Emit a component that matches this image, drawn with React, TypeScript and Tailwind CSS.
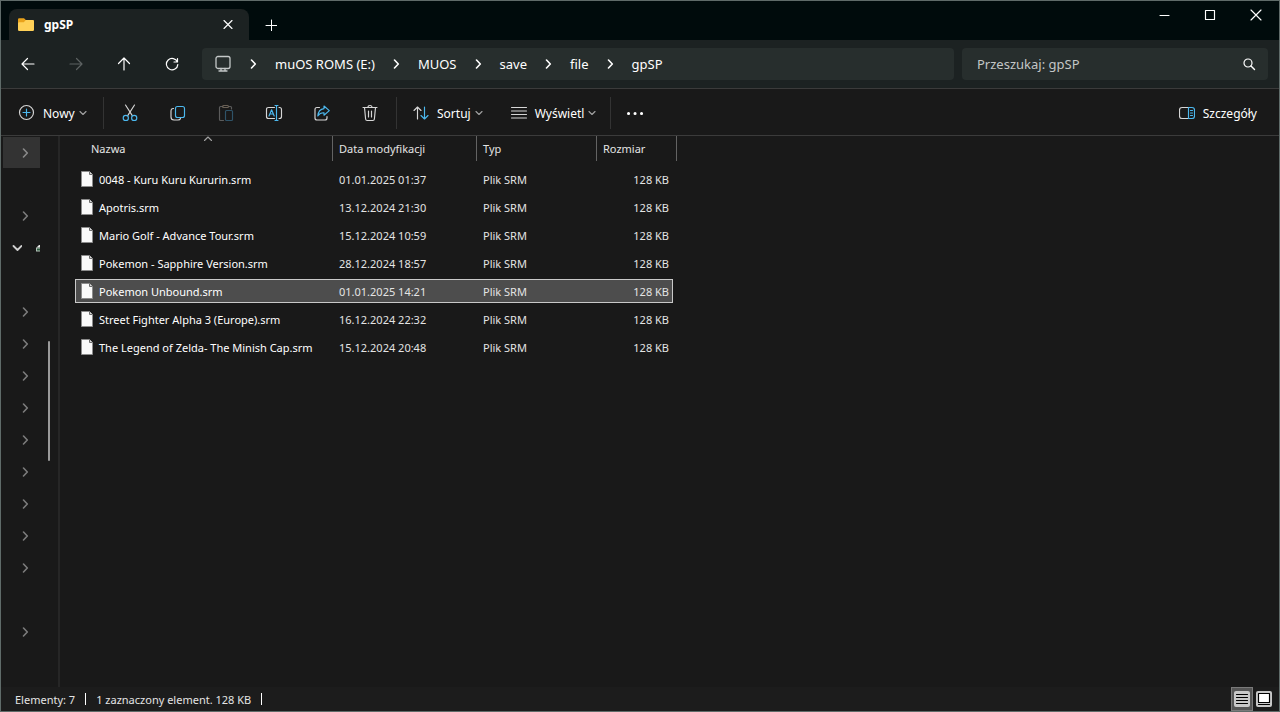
import React, { useState } from 'react';

const files = [
    { name: '0048 - Kuru Kuru Kururin.srm', date: '01.01.2025 01:37' },
    { name: 'Apotris.srm', date: '13.12.2024 21:30' },
    { name: 'Mario Golf - Advance Tour.srm', date: '15.12.2024 10:59' },
    { name: 'Pokemon - Sapphire Version.srm', date: '28.12.2024 18:57' },
    { name: 'Pokemon Unbound.srm', date: '01.01.2025 14:21' },
    { name: 'Street Fighter Alpha 3 (Europe).srm', date: '16.12.2024 22:32' },
    { name: 'The Legend of Zelda- The Minish Cap.srm', date: '15.12.2024 20:48' },
];

const crumbs = ['muOS ROMS (E:)', 'MUOS', 'save', 'file', 'gpSP'];

// one entry per 32px row of the collapsed tree
const tree = [
    'active', 'none', 'closed', 'open', 'none', 'closed', 'closed', 'closed', 'closed',
    'closed', 'closed', 'closed', 'closed', 'closed', 'none', 'closed',
];

type IconProps = { children: React.ReactNode; size?: number; className?: string };

const Icon = ({ children, size = 18, className = '' }: IconProps) => (
    <svg
        width={size}
        height={size}
        viewBox={`0 0 ${size} ${size}`}
        fill="none"
        stroke="currentColor"
        strokeWidth="1.15"
        strokeLinecap="round"
        strokeLinejoin="round"
        className={`shrink-0 ${className}`}
        aria-hidden="true"
    >
        {children}
    </svg>
);

const BLUE = '#4cb8ee';

const FolderIcon = () => (
    <Icon size={16}>
        <path d="M0 2.4Q0 1.2 1.2 1.2H6L7.8 3H14.5Q15.8 3 15.8 4.2V9H0Z" fill="#e9a21b" stroke="none" />
        <path d="M0 6.4Q0 5.2 1.2 5.2H5.8L7.8 3H14.6Q16 3 16 4.3V12.8Q16 14 14.8 14H1.2Q0 14 0 12.8Z" fill="#ffd158" stroke="none" />
    </Icon>
);

const FileIcon = () => (
    <svg width="12" height="16" viewBox="0 0 12 16" className="shrink-0" aria-hidden="true">
        <path d="M0.5 0.5H8.5L11.5 3.5V15.5H0.5Z" fill="#fafafa" stroke="#8c8c8c" />
        <path d="M8.5 0.5V3.5H11.5" fill="#d8d8d8" stroke="#6e6e6e" />
    </svg>
);

const ChevronRight = ({ className = '' }: { className?: string }) => (
    <Icon size={10} className={className}>
        <path d="M3.5 1L7.3 5L3.5 9" strokeWidth="1.6" />
    </Icon>
);

const ChevronDown = () => (
    <Icon size={8} className="text-[#a0a0a0]">
        <path d="M1 2.5L4 5.5L7 2.5" />
    </Icon>
);

const toolIcons = [
    {
        label: 'Wytnij',
        icon: (
            <Icon>
                <path d="M4.5 1L11.3 11.6M13.5 1L6.7 11.6" stroke="#d6d6d6" />
                <circle cx="4.8" cy="13.9" r="2.6" stroke={BLUE} />
                <circle cx="13.2" cy="13.9" r="2.6" stroke={BLUE} />
            </Icon>
        ),
    },
    {
        label: 'Kopiuj',
        icon: (
            <Icon>
                <path d="M4.5 4.5H4Q2 4.7 2 6.7V13Q2 16 5 16H9Q11 16 11.5 14.5" stroke="#d6d6d6" />
                <rect x="6.5" y="2.5" width="9" height="11" rx="2" stroke={BLUE} />
            </Icon>
        ),
    },
    {
        label: 'Wklej',
        icon: (
            <Icon>
                <path d="M6 2.5H3.5Q2.5 2.5 2.5 3.5V15.5Q2.5 16.5 3.5 16.5H6.5M12 2.5H13.5Q14.5 2.5 14.5 3.5V5" stroke="#5c5c5c" />
                <rect x="5.5" y="1.5" width="6" height="2" rx="1" stroke="#6a6055" />
                <rect x="8.5" y="6.5" width="7" height="10" rx="1" stroke="#2f5368" />
            </Icon>
        ),
    },
    {
        label: 'Zmień nazwę',
        icon: (
            <Icon>
                <path d="M9.5 3.5H3.5Q1.5 3.5 1.5 5.5V12.5Q1.5 14.5 3.5 14.5H9.5M14 3.5H14.5Q16.5 3.5 16.5 5.5V12.5Q16.5 14.5 14.5 14.5H14" stroke="#d6d6d6" />
                <path d="M4 12L6.6 5.8L9.2 12M5 10H8.2M11.5 1.5V16.5M10 1.5H13M10 16.5H13" stroke={BLUE} />
            </Icon>
        ),
    },
    {
        label: 'Udostępnij',
        icon: (
            <Icon>
                <path d="M6.5 3.5H4Q2 3.5 2 5.5V14Q2 16 4 16H12Q14 16 14 14V12.5" stroke="#d6d6d6" />
                <path d="M11 2L16.3 6.6L11 11.2V8.8Q7 8.6 4.8 12Q5.4 5.2 11 4.6Z" stroke={BLUE} />
            </Icon>
        ),
    },
    {
        label: 'Usuń',
        icon: (
            <Icon>
                <path d="M2 3.5H16M7 3.5Q7 1.5 9 1.5Q11 1.5 11 3.5M3.5 3.5L4.6 15Q4.7 16.5 6.2 16.5H11.8Q13.3 16.5 13.4 15L14.5 3.5M7.5 7V13M10.5 7V13" stroke="#d6d6d6" />
            </Icon>
        ),
    },
];

const TitleBar = () => (
    <header className="flex h-[39px] items-start bg-[#000b0c]">
        <div className="ml-2 mt-2 flex h-[31px] w-60 items-center rounded-t-lg bg-[#1c2222] pl-[9px] pr-[13px]">
            <FolderIcon />
            <span className="ml-2.5 flex-1 text-[12px] font-bold text-white">gpSP</span>
            <button aria-label="Zamknij kartę">
                <Icon size={16}>
                    <path d="M4 3.5L12 11.5M12 3.5L4 11.5" />
                </Icon>
            </button>
        </div>
        <button aria-label="Nowa karta" className="mt-2 flex h-8 w-11 items-center justify-center">
            <Icon size={12}>
                <path d="M6.5 1V12M1 6.5H12" strokeWidth="1" />
            </Icon>
        </button>
        <div className="ml-auto flex h-7">
            <button aria-label="Minimalizuj" className="flex w-[46px] items-center justify-center">
                <Icon size={12}><path d="M2 6.5H11" /></Icon>
            </button>
            <button aria-label="Maksymalizuj" className="flex w-[46px] items-center justify-center">
                <Icon size={12}><path d="M1.5 1.5H10.5V10.5H1.5Z" /></Icon>
            </button>
            <button aria-label="Zamknij" className="flex w-[46px] items-center justify-center">
                <Icon size={12}><path d="M1 1L11 11M11 1L1 11" /></Icon>
            </button>
        </div>
    </header>
);

const AddressBar = () => (
    <div className="flex h-12 items-center bg-[#1c2222] pl-[3px] pr-[11px]">
        <button aria-label="Wstecz" className="flex h-8 w-12 items-center justify-center">
            <Icon size={14}><path d="M1 7H13M6.5 1.5L1 7L6.5 12.5" strokeWidth="1.2" /></Icon>
        </button>
        <button aria-label="Dalej" disabled className="flex h-8 w-12 items-center justify-center text-[#5d6262]">
            <Icon size={14}><path d="M1 7H13M7.5 1.5L13 7L7.5 12.5" strokeWidth="1.2" /></Icon>
        </button>
        <button aria-label="W górę" className="flex h-8 w-12 items-center justify-center">
            <Icon size={14}><path d="M7 1V13M1.5 6.5L7 1L12.5 6.5" strokeWidth="1.2" /></Icon>
        </button>
        <button aria-label="Odśwież" className="flex h-8 w-12 items-center justify-center">
            <Icon size={14}>
                <path d="M12.4 5A5.7 5.7 0 1 0 12.8 7.6M12.5 1.5V5H9" strokeWidth="1.2" />
            </Icon>
        </button>
        <nav className="ml-1.5 flex h-8 flex-1 items-center rounded bg-[#272e2d] pl-3 text-[13px] text-white">
            <Icon size={18} className="text-[#c4c8c8]">
                <rect x="2" y="1.5" width="14" height="12" rx="2" strokeWidth="1.3" />
                <path d="M7 13.5V15.5M11 13.5V15.5M5 16H13" strokeWidth="1.3" />
            </Icon>
            <ul className="ml-2 flex items-center">
                {crumbs.map((c) => (
                    <li key={c} className="flex items-center">
                        <ChevronRight className="ml-2 mr-[9px]" />
                        <a href="#" className="px-2 pt-px">{c}</a>
                    </li>
                ))}
            </ul>
        </nav>
        <label className="ml-2 flex h-8 w-[306px] items-center rounded bg-[#272e2d] pl-[15px] pr-3">
            <input
                type="text"
                aria-label="Przeszukaj"
                placeholder="Przeszukaj: gpSP"
                className="min-w-0 flex-1 bg-transparent pt-px text-[13px] text-white outline-none placeholder:text-[#c3c6c6]"
            />
            <Icon size={14}>
                <circle cx="6" cy="6" r="4" strokeWidth="1.2" />
                <path d="M9 9L12.5 12.5" strokeWidth="1.4" />
            </Icon>
        </label>
    </div>
);

const Separator = () => <div className="h-8 w-px bg-[#333333]" />;

const Toolbar = () => (
    <div className="flex h-12 items-center border-y border-[#3b3b3b] bg-[#191919] pt-0.5 text-[12px] text-white">
        <button className="flex w-[102px] items-center pl-4">
            <Icon size={18} className="text-[#d6d6d6]">
                <circle cx="9.5" cy="8.5" r="7" />
                <path d="M9.5 5V12M6 8.5H13" stroke={BLUE} />
            </Icon>
            <span className="ml-2 mr-1 pt-0.5">Nowy</span>
            <ChevronDown />
        </button>
        <Separator />
        <div className="ml-0.5 flex">
            {toolIcons.map((t) => (
                <button key={t.label} aria-label={t.label} className="flex h-8 w-12 items-center justify-center">
                    {t.icon}
                </button>
            ))}
        </div>
        <div className="ml-0.5"><Separator /></div>
        <button className="ml-4 flex items-center">
            <Icon size={16}>
                <path d="M4.5 14V2M1 5.5L4.5 2L8 5.5" stroke="#d6d6d6" />
                <path d="M11.5 2V14M8 10.5L11.5 14L15 10.5" stroke={BLUE} />
            </Icon>
            <span className="ml-2 mr-1 pt-0.5">Sortuj</span>
            <ChevronDown />
        </button>
        <button className="ml-7 flex items-center">
            <Icon size={16} className="text-[#d6d6d6]">
                <path d="M0.5 2.5H15.5M0.5 6H15.5M0.5 9.5H15.5M0.5 13H15.5" />
            </Icon>
            <span className="ml-2 mr-1 pt-0.5">Wyświetl</span>
            <ChevronDown />
        </button>
        <div className="ml-3.5"><Separator /></div>
        <button aria-label="Więcej" className="flex h-8 w-12 items-center justify-center">
            <Icon size={18}>
                <path d="M2.5 9.5H2.6M9 9.5H9.1M15.5 9.5H15.6" strokeWidth="3" />
            </Icon>
        </button>
        <button className="ml-auto mr-[22px] flex items-center">
            <Icon size={16}>
                <path d="M9.5 2.5H3Q0.5 2.5 0.5 5V11Q0.5 13.5 3 13.5H9.5" stroke="#d6d6d6" />
                <path d="M9.5 2.5H13Q15.5 2.5 15.5 5V11Q15.5 13.5 13 13.5H9.5ZM11.5 5.5H13.5M11.5 8H13.5M11.5 10.5H13.5" stroke={BLUE} />
            </Icon>
            <span className="ml-2 pt-0.5">Szczegóły</span>
        </button>
    </div>
);

const Sidebar = () => (
    <aside className="flex w-[59px] border-r-2 border-[#262626]">
        <ul className="w-[39px]">
            {tree.map((state, i) => (
                <li key={i} className="h-8">
                    {state === 'active' && (
                        <button aria-label="Rozwiń" className="ml-0.5 flex h-8 w-[37px] items-center border-t border-[#191919] bg-[#333333] pl-[17px] text-[#8a8a8a]">
                            <ChevronRight />
                        </button>
                    )}
                    {state === 'closed' && (
                        <button aria-label="Rozwiń" className="flex h-8 w-full items-center pl-[19px] text-[#7c7c7c]">
                            <ChevronRight />
                        </button>
                    )}
                    {state === 'open' && (
                        <button aria-label="Zwiń" className="flex h-8 w-full items-center justify-between pl-[11px]">
                            <Icon size={10} className="text-[#cfcfcf]">
                                <path d="M1.5 3L5.5 7L9.5 3" strokeWidth="1.8" />
                            </Icon>
                            <svg width="4" height="8" viewBox="0 0 4 8" aria-hidden="true">
                                <path d="M0.5 3.5L3 1H4V3.5Z" fill="#e8e8e8" />
                                <path d="M0 3.5H4V7.5H0Z" fill="#b4c2b8" />
                                <path d="M1 4.5H4V6.5H1Z" fill="#2f5c40" />
                            </svg>
                        </button>
                    )}
                </li>
            ))}
        </ul>
        <div className="ml-2 mt-[205px] h-[120px] w-0.5 rounded-full bg-[#9a9a9a]" />
    </aside>
);

const FileTable = () => {
    const [selected, setSelected] = useState('Pokemon Unbound.srm');

    const cell = (name: string) =>
        `flex h-6 items-center border-y ${
            name === selected ? 'border-[#c9c9c9] bg-[#4d4d4d]' : 'border-transparent'
        }`;

    return (
        <table className="w-[602px] table-fixed border-collapse text-left text-[11px] text-[#e4e4e4]">
            <thead>
                <tr className="h-[27px] align-top">
                    <th className="w-[258px] p-0 font-normal">
                        <div className="relative flex h-[25px] items-center border-r border-[#636363] pl-4 pt-px">
                            Nazwa
                            <Icon size={10} className="absolute left-32 top-0 text-[#a0a0a0]">
                                <path d="M1.5 4.5L5 1L8.5 4.5" />
                            </Icon>
                        </div>
                    </th>
                    <th className="w-36 p-0 font-normal">
                        <div className="flex h-[25px] items-center border-r border-[#636363] pl-1.5 pt-px">Data modyfikacji</div>
                    </th>
                    <th className="w-[120px] p-0 font-normal">
                        <div className="flex h-[25px] items-center border-r border-[#636363] pl-1.5 pt-px">Typ</div>
                    </th>
                    <th className="w-20 p-0 font-normal">
                        <div className="flex h-[25px] items-center border-r border-[#636363] pl-1.5 pt-px">Rozmiar</div>
                    </th>
                </tr>
            </thead>
            <tbody>
                {files.map((f) => (
                    <tr key={f.name} onClick={() => setSelected(f.name)}>
                        <td className="p-0 pt-1 text-white">
                            <div className={`${cell(f.name)} border-l pl-[5px]`}>
                                <FileIcon />
                                <span className="ml-1.5 whitespace-nowrap pt-0.5">{f.name}</span>
                            </div>
                        </td>
                        <td className="p-0 pt-1"><div className={`${cell(f.name)} pl-1.5 pt-0.5`}>{f.date}</div></td>
                        <td className="p-0 pt-1"><div className={`${cell(f.name)} pl-1.5 pt-0.5`}>Plik SRM</div></td>
                        <td className="p-0 pr-1 pt-1">
                            <div className={`${cell(f.name)} justify-end border-r pr-[3px] pt-0.5`}>128 KB</div>
                        </td>
                    </tr>
                ))}
            </tbody>
        </table>
    );
};

const StatusBar = () => (
    <footer className="flex h-6 items-center bg-[#1c1c1c] pl-3.5 pr-[7px] text-[11px] text-[#e4e4e4]">
        <span className="pt-0.5">Elementy: 7</span>
        <span className="mx-2.5 h-3 w-px bg-white" />
        <span className="pt-0.5">1 zaznaczony element. 128 KB</span>
        <span className="mx-2.5 h-3 w-px bg-white" />
        <button aria-label="Szczegóły listy" className="ml-auto flex h-6 w-[22px] items-center justify-center border border-[#7a7a7a] bg-[#555555]">
            <Icon size={16}>
                <rect width="16" height="16" rx="2" fill="#c8c8c8" stroke="none" />
                <path d="M2.5 3.5H13.5M2.5 6.5H13.5M2.5 9.5H13.5M2.5 12.5H13.5" stroke="#000000" />
            </Icon>
        </button>
        <button aria-label="Duże ikony" className="ml-[3px]">
            <Icon size={16}>
                <rect width="16" height="16" rx="2" fill="#c8c8c8" stroke="none" />
                <rect x="2.5" y="2.5" width="11" height="9" fill="#ffffff" stroke="#000000" />
                <path d="M2.5 13.5H13.5" stroke="#000000" />
            </Icon>
        </button>
    </footer>
);

const App = () => {
    return (
        <div className="flex min-h-screen flex-col border border-[#5f6b69] bg-[#191919] font-['Noto_Sans',sans-serif] text-white">
            <TitleBar />
            <AddressBar />
            <Toolbar />
            <main className="flex flex-1">
                <Sidebar />
                <section className="flex-1 pl-[15px]">
                    <FileTable />
                </section>
            </main>
            <StatusBar />
        </div>
    );
};

export default App;
